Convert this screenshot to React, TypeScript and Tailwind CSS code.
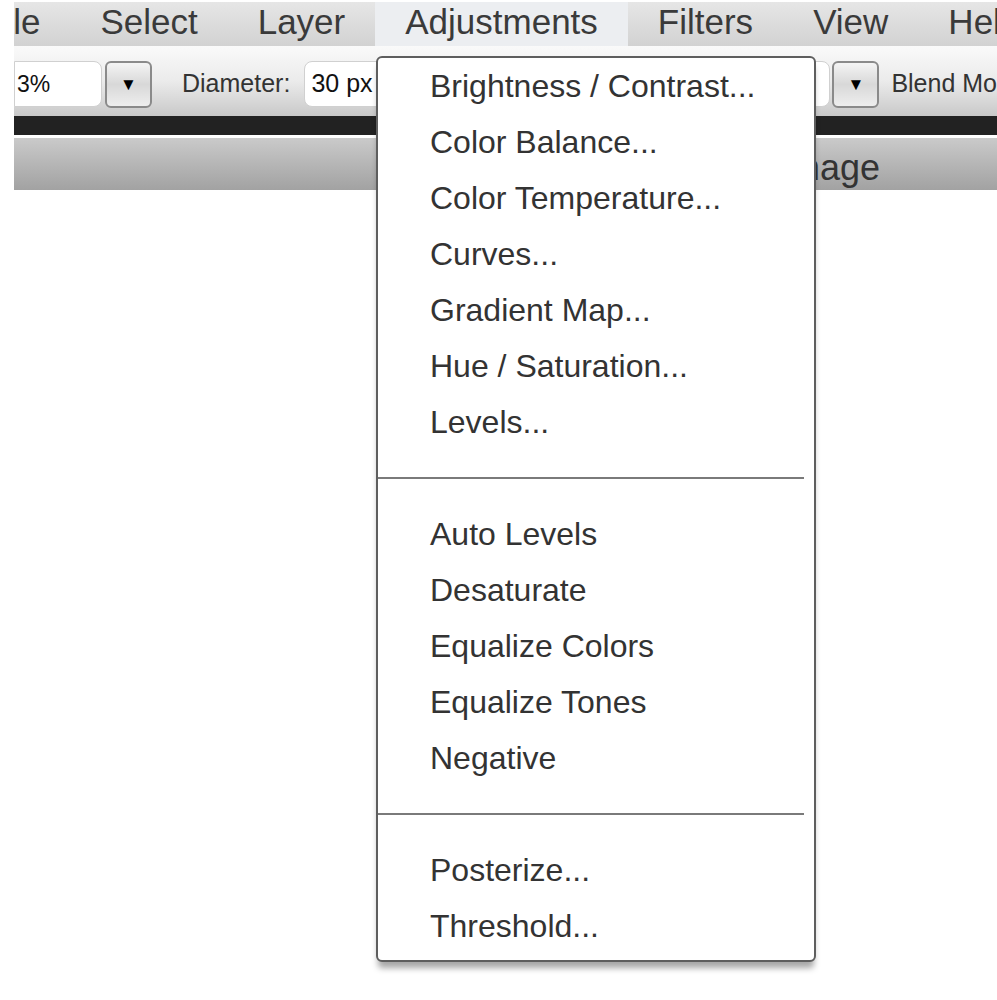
import React from "react";

const menuBar = ["File", "Select", "Layer", "Adjustments", "Filters", "View", "Help"];

type Entry = { label: string } | { sep: true };

const entries: Entry[] = [
  { label: "Brightness / Contrast..." },
  { label: "Color Balance..." },
  { label: "Color Temperature..." },
  { label: "Curves..." },
  { label: "Gradient Map..." },
  { label: "Hue / Saturation..." },
  { label: "Levels..." },
  { sep: true },
  { label: "Auto Levels" },
  { label: "Desaturate" },
  { label: "Equalize Colors" },
  { label: "Equalize Tones" },
  { label: "Negative" },
  { sep: true },
  { label: "Posterize..." },
  { label: "Threshold..." },
];

function DropButton() {
  return (
    <div className="flex h-[47px] w-[47px] items-center justify-center rounded-md border-2 border-[#8a8a8a] bg-gradient-to-b from-[#f4f4f4] via-[#d8d8d8] to-[#eeeeee]">
      <span className="text-[17px] leading-none text-black">▼</span>
    </div>
  );
}

export default function App() {
  return (
    <div
      className="relative h-[1000px] w-[997px] overflow-hidden bg-white"
      style={{ fontFamily: '"Liberation Sans", Arial, sans-serif' }}
    >
      <div className="ml-[14px] flex flex-col">
        {/* Menu bar */}
        <div className="mt-[2px] flex h-[44px] overflow-hidden bg-gradient-to-b from-[#e6e6e6] to-[#d2d2d2] text-[35px] leading-[40px] text-[#3a3a3a]">
          <div className="ml-[-60px] flex">
            {menuBar.map((m) => (
              <div
                key={m}
                className={`whitespace-nowrap px-[30px] ${m === "Adjustments" ? "bg-[#eceef1]" : ""}`}
              >
                {m}
              </div>
            ))}
          </div>
        </div>

        {/* Toolbar */}
        <div className="flex h-[70px] items-center overflow-hidden bg-gradient-to-b from-[#fafafa] via-[#ebebeb] to-[#c9c9c9] pt-[6px] text-[25px] text-[#333]">
          <div className="flex h-[46px] w-[88px] shrink-0 items-center rounded-r-lg border border-[#d0d0d0] bg-white pl-[2px] text-[23px] text-[#111]">
            3%
          </div>
          <div className="ml-[3px] shrink-0">
            <DropButton />
          </div>
          <span className="ml-[30px] shrink-0">Diameter:</span>
          <div className="ml-[14px] flex h-[46px] w-[120px] shrink-0 items-center rounded-lg border border-[#d0d0d0] bg-white pl-[6px] text-[#111]">
            30 px
          </div>
          <div className="ml-[284px] h-[46px] w-[122px] shrink-0 rounded-lg border border-[#d0d0d0] bg-white" />
          <div className="ml-[2px] shrink-0">
            <DropButton />
          </div>
          <span className="ml-[12px] shrink-0 whitespace-nowrap">Blend Mode</span>
        </div>

        {/* Dark separator */}
        <div className="h-[19px] bg-[#222]" />

        {/* Window title bar */}
        <div className="mt-[3px] flex h-[52px] items-end bg-gradient-to-b from-[#cacaca] to-[#a2a2a2] text-[36px] leading-[44px] text-[#333]">
          <span className="ml-[766px]">Image</span>
        </div>
      </div>

      {/* Adjustments dropdown */}
      <div className="absolute left-[376px] top-[56px] w-[440px] rounded-md border-2 border-[#5e5e5e] bg-white pb-[6px] shadow-[0_8px_6px_-2px_rgba(0,0,0,0.35)]">
        {entries.map((e, i) =>
          "sep" in e ? (
            <div key={i} className="flex h-[56px] items-center pr-[10px]">
              <div className="h-[2px] w-full bg-[#7a7a7a]" />
            </div>
          ) : (
            <div
              key={i}
              className="flex h-[56px] items-center whitespace-nowrap pl-[52px] text-[32px] text-[#333]"
            >
              {e.label}
            </div>
          )
        )}
      </div>
    </div>
  );
}
